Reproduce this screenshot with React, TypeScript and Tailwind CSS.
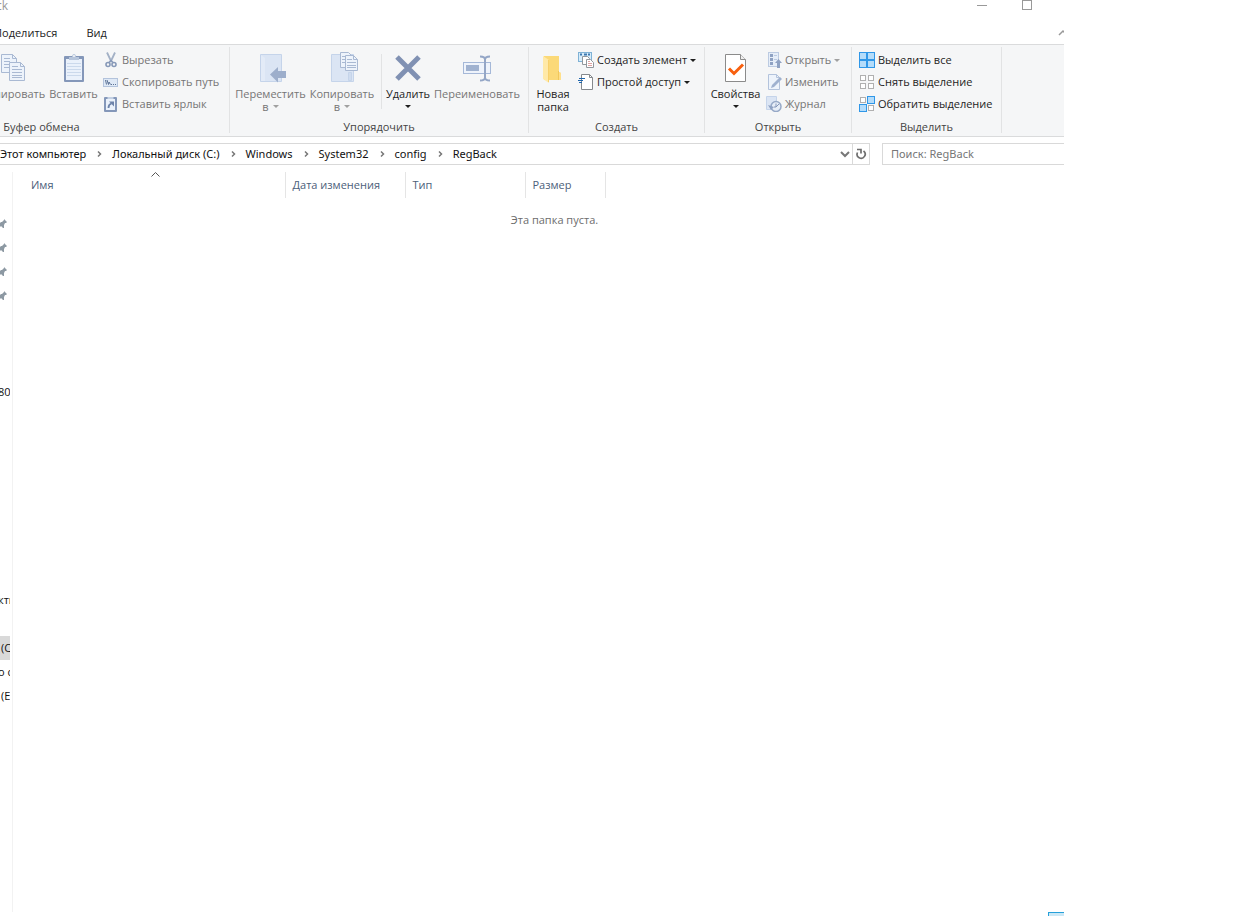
import type { ReactNode } from "react";
import { clsx } from "clsx";

// Icons are drawn on whole pixels so the thin outlines stay sharp.

function CopyIcon() {
  return (
    <svg width="32" height="32" viewBox="0 0 32 32" fill="#edf3fb" stroke="#a9b9d3">
      <path d="M4.5 2.5h11l4 4v14h-15z" />
      <path d="M15.500 2.500v4h4M7 6.500h6M7 9.500h6M7 12.500h6M7 15.500h6" fill="none" />
      <path d="M12.500 10.500h11l4 4v14h-15z" />
      <path d="M23.500 10.500v4h4M15 14.500h6M15 17.500h10M15 20.500h10M15 23.500h10M15 25.500h10" fill="none" />
    </svg>
  );
}

function PasteIcon() {
  return (
    <svg width="32" height="32" viewBox="0 0 32 32">
      <rect x="6" y="4" width="20" height="26" rx="1" fill="#8497b9" />
      <rect x="8" y="7" width="16" height="21" fill="#eaf1fb" />
      <path d="M9 11.500h14M9 14.500h14M9 17.500h14M9 20.500h14M9 23.500h14" stroke="#cbd9ec" />
      <path d="M11 8V5h3c0-4 4-4 4 0h3v3z" fill="#b6c5db" />
      <circle cx="16" cy="4" r="1" fill="#f5f6f7" />
    </svg>
  );
}

function CutIcon() {
  return (
    <svg width="16" height="16" viewBox="0 0 16 16" fill="none">
      <path d="M4 0.500l4.500 9.500M12 0.500L7.500 10" stroke="#a3b1c6" strokeWidth="1.800" />
      <circle cx="5" cy="12.500" r="2" stroke="#8799b8" strokeWidth="1.600" />
      <circle cx="11" cy="12.500" r="2" stroke="#8799b8" strokeWidth="1.600" />
      <path d="M6 10.500l2-2 2 2" stroke="#8799b8" strokeWidth="1.500" />
    </svg>
  );
}

function CopyPathIcon() {
  return (
    <svg width="16" height="16" viewBox="0 0 16 16">
      <rect x="0.500" y="4.500" width="14" height="8" fill="#dfe9f6" stroke="#b3c3dc" />
      <path d="M2.500 6l1 4.500M4 6l1.500 4.500L6 8l1.500 2.500" fill="none" stroke="#5d7396" />
      <path d="M8 10.500h1M10 10.500h1M12 10.500h1" stroke="#5d7396" />
    </svg>
  );
}

function PasteLinkIcon() {
  return (
    <svg width="16" height="16" viewBox="0 0 16 16">
      <rect x="1" y="1" width="13" height="15" rx="1" fill="#8497b9" />
      <rect x="3" y="3" width="9" height="11" fill="#eaf1fb" />
      <path d="M4.500 3V1h6v2z" fill="#c3d0e3" />
      <path d="M5.500 12c0-3 1-4 3-4.500" fill="none" stroke="#6d83aa" strokeWidth="1.800" />
      <path d="M6 5.500h5v5z" fill="#6d83aa" />
    </svg>
  );
}

function MoveToIcon() {
  return (
    <svg width="32" height="32" viewBox="0 0 32 32">
      <path d="M5.500 2.500h21v27h-21z" fill="#dbe5f4" stroke="#c5d4ea" />
      <path d="M6 3l4 3v23H6z" fill="#e3ebf7" />
      <path d="M15 22.500l8-7.500v4h8v7h-8v4.500z" fill="#9daecb" />
    </svg>
  );
}

function CopyToIcon() {
  return (
    <svg width="32" height="32" viewBox="0 0 32 32" stroke="#a9b9d3">
      <path d="M5.500 2.500h22v27h-22z" fill="#dbe5f4" stroke="#c5d4ea" />
      <path d="M22.500 20.500h3v8h-3z" fill="#cfdcef" stroke="#c5d4ea" />
      <path d="M14.500 0.500h8l3 3v12h-11z" fill="#edf3fb" />
      <path d="M16 4.500h6M16 7.500h6M16 10.500h6" />
      <path d="M19.500 3.500h8l4 4v11h-12z" fill="#edf3fb" />
      <path d="M27.500 3.500v4h4M21 7.500h5M21 10.500h9M21 13.500h9M21 15.500h9" fill="none" />
    </svg>
  );
}

function DeleteIcon() {
  return (
    <svg width="32" height="32" viewBox="0 0 32 32">
      <path d="M5 5l22 22M27 5L5 27" stroke="#8091b3" strokeWidth="5" />
    </svg>
  );
}

function RenameIcon() {
  return (
    <svg width="32" height="32" viewBox="0 0 32 32" fill="none">
      <rect x="2.500" y="10.500" width="27" height="11" fill="#eef3fb" stroke="#a5b8d8" />
      <rect x="5" y="13" width="13" height="6" fill="#a0b2d0" />
      <path d="M19 4.500c4 0 5 1 5 3 0-2 1-3 5-3M19 28.500c4 0 5-1 5-3 0 2 1 3 5 3M24 6v21" stroke="#94a6c6" strokeWidth="2" />
    </svg>
  );
}

function FolderIcon() {
  return (
    <svg width="32" height="32" viewBox="0 0 32 32">
      <path d="M7 4h15v16l2 1v7H7z" fill="#fbd978" />
      <path d="M6 4l6 4v23l-6-4z" fill="#ffe9a8" />
      <path d="M11.500 8v22" stroke="#f7d06c" />
      <path d="M21.500 19v9" stroke="#f0c75c" />
      <path d="M22 20l2 1v7h-2z" fill="#ffe08c" />
    </svg>
  );
}

function NewItemIcon() {
  return (
    <svg width="16" height="16" viewBox="0 0 16 16" fill="#fff">
      <rect x="0.500" y="0.500" width="13" height="9" fill="#d6ecfa" stroke="#7fb2d6" />
      <path d="M2 2.500h2M6 2.500h3M10 2.500h2" stroke="#3c78b0" strokeWidth="2" />
      <path d="M4.500 4.500h5l2 2v6h-7z" stroke="#92979c" />
      <path d="M8.500 7.500h4l3 3v5h-7z" stroke="#92979c" />
      <path d="M10 9.500h2M10 11.500h4M10 13.500h4" stroke="#dfa3a3" />
    </svg>
  );
}

function EasyAccessIcon() {
  return (
    <svg width="16" height="16" viewBox="0 0 16 16" fill="none">
      <path d="M3.500 0.500h8l3 3v12h-11z" fill="#fff" stroke="#85898d" />
      <path d="M11.500 0.500v3h3" stroke="#85898d" />
      <path d="M1 4.500h6M0 6.500h5M1 8.500h3" stroke="#1f66ad" />
    </svg>
  );
}

function PropertiesIcon() {
  return (
    <svg width="32" height="32" viewBox="0 0 32 32">
      <path d="M5.500 2.500h15l5 5v22h-20z" fill="#fff" stroke="#8b8b8b" />
      <path d="M20.500 2.500v5h5" fill="#eee" stroke="#8b8b8b" />
      <path d="M9 16.500l5 5 9-9" fill="none" stroke="#f8600f" strokeWidth="3" />
    </svg>
  );
}

function OpenIcon() {
  return (
    <svg width="16" height="16" viewBox="0 0 16 16">
      <rect x="2.500" y="0.500" width="10" height="14" fill="#e6eef9" stroke="#bccbe2" />
      <path d="M4 2h3v3H4zM4 6h3v3H4zM4 10h3v3H4z" fill="#8fa2c3" />
      <path d="M8 3.500h3M8 7.500h3" stroke="#bccbe2" />
      <path d="M12.500 7l3.500 4h-2v5h-3v-5H9z" fill="#8fa2c3" />
    </svg>
  );
}

function EditIcon() {
  return (
    <svg width="16" height="16" viewBox="0 0 16 16">
      <path d="M2.500 0.500h8l3 3v12h-11z" fill="#edf3fb" stroke="#b3c3dc" />
      <path d="M10.500 0.500v3h3" fill="none" stroke="#b3c3dc" />
      <path d="M5 14l1-3 8-8 2 2-8 8z" fill="#9fb1cf" />
    </svg>
  );
}

function HistoryIcon() {
  return (
    <svg width="16" height="16" viewBox="0 0 16 16">
      <path d="M0.500 0.500h10v13h-10z" fill="#dbe5f4" stroke="#c5d4ea" />
      <circle cx="10" cy="10.500" r="5" fill="#e6edf7" stroke="#97a9c7" strokeWidth="1.500" />
      <path d="M10 7.500v3.500l3-3M10 11H8" fill="none" stroke="#8497b9" />
      <path d="M2 9l3 5 3-3z" fill="#8fa2c3" />
    </svg>
  );
}

const CELLS = [
  [0, 0],
  [8, 0],
  [0, 8],
  [8, 8],
];

function SelectIcon({ on }: { on: boolean[] }) {
  return (
    <svg width="16" height="16" viewBox="0 0 16 16">
      {CELLS.map(([x, y], i) =>
        on[i] ? (
          <g key={i}>
            <rect x={x} y={y} width="8" height="8" fill="#2f97e8" />
            <rect x={x + 1} y={y + 1} width="6" height="6" fill="#b4dcfa" />
          </g>
        ) : (
          <rect key={i} x={x + 1.5} y={y + 1.5} width="5" height="5" fill="#fff" stroke="#b0b0b0" />
        ),
      )}
    </svg>
  );
}

function Arrow() {
  return (
    <svg width="6" height="3" viewBox="0 0 6 3" fill="currentColor" className="shrink-0">
      <path d="M0 0h6L3 3z" />
    </svg>
  );
}

function PinIcon() {
  return (
    <svg width="8" height="12" viewBox="0 0 8 12" fill="#8d99a3">
      <path d="M4 1l3 3-1 1H5L4 7v3H3L1 8l-1 1V5l1-1h1l2-2z" />
    </svg>
  );
}

type LargeProps = {
  icon: ReactNode;
  label: string;
  second?: string;
  arrow?: boolean;
  disabled?: boolean;
  className: string;
};

function LargeButton({ icon, label, second, arrow, disabled, className }: LargeProps) {
  return (
    <button
      type="button"
      disabled={disabled}
      className={clsx(
        "flex shrink-0 flex-col items-center pt-[5px] leading-[13px]",
        disabled ? "text-[#757575]" : "text-[#1e1e1e]",
        className,
      )}
    >
      {icon}
      <span className="mt-[3px] whitespace-nowrap">{label}</span>
      <span className={clsx("flex h-[13px] items-center gap-1", disabled && arrow && "text-[#a0a0a0]")}>
        {second && <span className={clsx(disabled && "text-[#757575]")}>{second}</span>}
        {arrow && <Arrow />}
      </span>
    </button>
  );
}

type SmallProps = { icon: ReactNode; label: string; arrow?: boolean; disabled?: boolean };

function SmallButton({ icon, label, arrow, disabled }: SmallProps) {
  return (
    <button
      type="button"
      disabled={disabled}
      className={clsx(
        "flex h-[22px] items-center gap-[3px] whitespace-nowrap",
        disabled ? "text-[#757575]" : "text-[#1e1e1e]",
      )}
    >
      {icon}
      <span>{label}</span>
      {arrow && (
        <span className={clsx(disabled && "text-[#a0a0a0]")}>
          <Arrow />
        </span>
      )}
    </button>
  );
}

function Group({ title, className, children }: { title: string; className: string; children: ReactNode }) {
  return (
    <section
      aria-label={title}
      className={clsx("flex shrink-0 flex-col border-r border-[#e2e3e4]", className)}
    >
      <div className="flex flex-1">{children}</div>
      <h2 className="text-center leading-[13px] text-[#444]">{title}</h2>
    </section>
  );
}

const COLUMNS = [
  { label: "Дата изменения", width: "w-[120px]" },
  { label: "Тип", width: "w-[120px]" },
  { label: "Размер", width: "w-[80px]" },
];

const PATH = ["Этот компьютер", "Локальный диск (C:)", "Windows", "System32", "config", "RegBack"];

function Ribbon() {
  return (
    <div className="flex h-[93px] border-y border-[#dadbdc] bg-[#f5f6f7] pt-0.5 pb-[3px]">
      <Group title="Буфер обмена" className="w-[230px] [&>h2]:pr-[146px]">
        <LargeButton icon={<CopyIcon />} label="Копировать" disabled className="-ml-5 w-[66px]" />
        <LargeButton icon={<PasteIcon />} label="Вставить" disabled className="w-[55px]" />
        <div className="ml-0.5 pt-0.5">
          <SmallButton icon={<CutIcon />} label="Вырезать" disabled />
          <SmallButton icon={<CopyPathIcon />} label="Скопировать путь" disabled />
          <SmallButton icon={<PasteLinkIcon />} label="Вставить ярлык" disabled />
        </div>
      </Group>
      <Group title="Упорядочить" className="w-[299px]">
        <LargeButton icon={<MoveToIcon />} label="Переместить" second="в" arrow disabled className="ml-1 w-[73px]" />
        <LargeButton icon={<CopyToIcon />} label="Копировать" second="в" arrow disabled className="w-[70px]" />
        <div className="mt-[7px] mr-0.5 ml-1 h-[55px] w-px bg-[#e2e3e4]" />
        <LargeButton icon={<DeleteIcon />} label="Удалить" arrow className="w-[48px]" />
        <LargeButton icon={<RenameIcon />} label="Переименовать" disabled className="w-[90px]" />
      </Group>
      <Group title="Создать" className="w-[176px]">
        <LargeButton icon={<FolderIcon />} label="Новая" second="папка" className="ml-1 w-[40px]" />
        <div className="ml-[5px] pt-0.5">
          <SmallButton icon={<NewItemIcon />} label="Создать элемент" arrow />
          <SmallButton icon={<EasyAccessIcon />} label="Простой доступ" arrow />
        </div>
      </Group>
      <Group title="Открыть" className="w-[147px]">
        <LargeButton icon={<PropertiesIcon />} label="Свойства" arrow className="ml-[3px] w-[55px]" />
        <div className="ml-[3px] pt-0.5">
          <SmallButton icon={<OpenIcon />} label="Открыть" arrow disabled />
          <SmallButton icon={<EditIcon />} label="Изменить" disabled />
          <SmallButton icon={<HistoryIcon />} label="Журнал" disabled />
        </div>
      </Group>
      <Group title="Выделить" className="w-[150px]">
        <div className="ml-[7px] pt-0.5">
          <SmallButton icon={<SelectIcon on={[true, true, true, true]} />} label="Выделить все" />
          <SmallButton icon={<SelectIcon on={[false, false, false, false]} />} label="Снять выделение" />
          <SmallButton icon={<SelectIcon on={[false, true, true, false]} />} label="Обратить выделение" />
        </div>
      </Group>
    </div>
  );
}

function AddressBar() {
  return (
    <div className="mt-1.5 flex h-[22px] gap-3 font-['Noto_Sans',sans-serif]">
      <div className="flex min-w-0 flex-1 border-y border-r border-[#d9d9d9]">
        <nav aria-label="Путь" className="flex flex-1 items-center whitespace-nowrap">
          {PATH.map((part, i) => (
            <span key={part} className="flex items-center">
              {i > 0 && (
                <svg width="26" height="8" viewBox="0 0 26 8" fill="none" stroke="#777" strokeWidth="1.500">
                  <path d="M12 1.500l2.500 2.500-2.500 2.500" />
                </svg>
              )}
              <a href="#" className="text-[#111]">{part}</a>
            </span>
          ))}
        </nav>
        <button type="button" aria-label="Предыдущие расположения" className="px-0.5">
          <svg width="10" height="8" viewBox="0 0 10 8" fill="none" stroke="#777" strokeWidth="2">
            <path d="M1 2l4 4 4-4" />
          </svg>
        </button>
        <button type="button" aria-label="Обновить" className="flex w-[17px] items-center justify-center border-l border-[#d9d9d9]">
          <svg width="12" height="12" viewBox="0 0 12 12" fill="none" stroke="#6e6e6e" strokeWidth="1.700">
            <path d="M2 1.500h4v4M2.500 4.500a4 4 0 1 0 6-1.500" />
          </svg>
        </button>
      </div>
      <input
        type="search"
        aria-label="Поиск"
        placeholder="Поиск: RegBack"
        className="w-[182px] border-y border-l border-[#d9d9d9] pl-2 outline-none placeholder:text-[#767676]"
      />
    </div>
  );
}

function Sidebar() {
  return (
    <nav aria-label="Область переходов" className="w-[13px] shrink-0 border-r border-[#f2f2f2] pt-10">
      <div className="w-[10px] overflow-hidden whitespace-nowrap">
        {[1, 2, 3, 4].map((n) => (
          <a key={n} href="#" aria-label={`Закреплено ${n}`} className="flex h-6 items-center">
            <PinIcon />
          </a>
        ))}
        <a href="#" className="mt-[72px] -ml-0.5 flex h-6 items-center">80</a>
        <a href="#" className="mt-[184px] -ml-0.5 flex h-6 items-center">кти</a>
        <a href="#" className="mt-6 flex h-6 items-center bg-[#d9d9d9] pl-px">(C</a>
        <a href="#" className="-ml-0.5 flex h-6 items-center">о с</a>
        <a href="#" className="flex h-6 items-center pl-px">(E</a>
      </div>
    </nav>
  );
}

export default function App() {
  return (
    <div className="h-screen overflow-hidden bg-white font-['Open_Sans','Noto_Sans',sans-serif] text-[11px] text-[#111]">
      <div className="mr-[186px] flex h-full flex-col overflow-hidden">
        <header className="flex h-[22px] items-start text-[#999]">
          <h1 className="-ml-1 flex-1 text-[12px] leading-[12px]">ck</h1>
          <button type="button" aria-label="Свернуть" className="mr-[35px] pt-[5px]">
            <svg width="10" height="1" viewBox="0 0 10 1">
              <path d="M0 0h10v1H0z" fill="#999" />
            </svg>
          </button>
          <button type="button" aria-label="Развернуть" className="mr-8 h-[10px] w-[10px] border border-[#999]" />
        </header>

        <div className="flex h-[22px] items-center text-[#222]">
          <button type="button" className="-ml-1.5">Поделиться</button>
          <button type="button" className="ml-[29px]">Вид</button>
          <button type="button" aria-label="Свернуть ленту" className="ml-auto w-[6px] overflow-hidden">
            <svg width="10" height="8" viewBox="0 0 10 8" fill="none" stroke="#999" strokeWidth="1.500">
              <path d="M1 6l4-4 4 4" />
            </svg>
          </button>
        </div>

        <Ribbon />
        <AddressBar />

        <div className="mt-[7px] flex min-h-0 flex-1">
          <Sidebar />
          <main className="flex-1">
            <table className="table-fixed border-collapse text-left text-[#4c607a]">
              <thead>
                <tr className="h-[26px]">
                  <th className="relative w-[272px] border-r border-[#e5e5e5] pl-[18px] font-normal">
                    Имя
                    <svg width="9" height="5" viewBox="0 0 9 5" fill="none" stroke="#555" className="absolute top-0 left-[138px]">
                      <path d="M0.500 4.500l4-4 4 4" />
                    </svg>
                  </th>
                  {COLUMNS.map(({ label, width }) => (
                    <th key={label} className={clsx("border-r border-[#e5e5e5] pl-[7px] font-normal", width)}>
                      {label}
                    </th>
                  ))}
                </tr>
              </thead>
            </table>
            <p className="mt-3.5 pl-8 text-center text-[#6d6d6d]">Эта папка пуста.</p>
          </main>
        </div>

        <footer className="flex h-1 justify-end">
          <button type="button" aria-label="Крупные значки" className="w-4 border-t border-l border-[#26a0da] bg-[#cbe8f6]" />
        </footer>
      </div>
    </div>
  );
}
